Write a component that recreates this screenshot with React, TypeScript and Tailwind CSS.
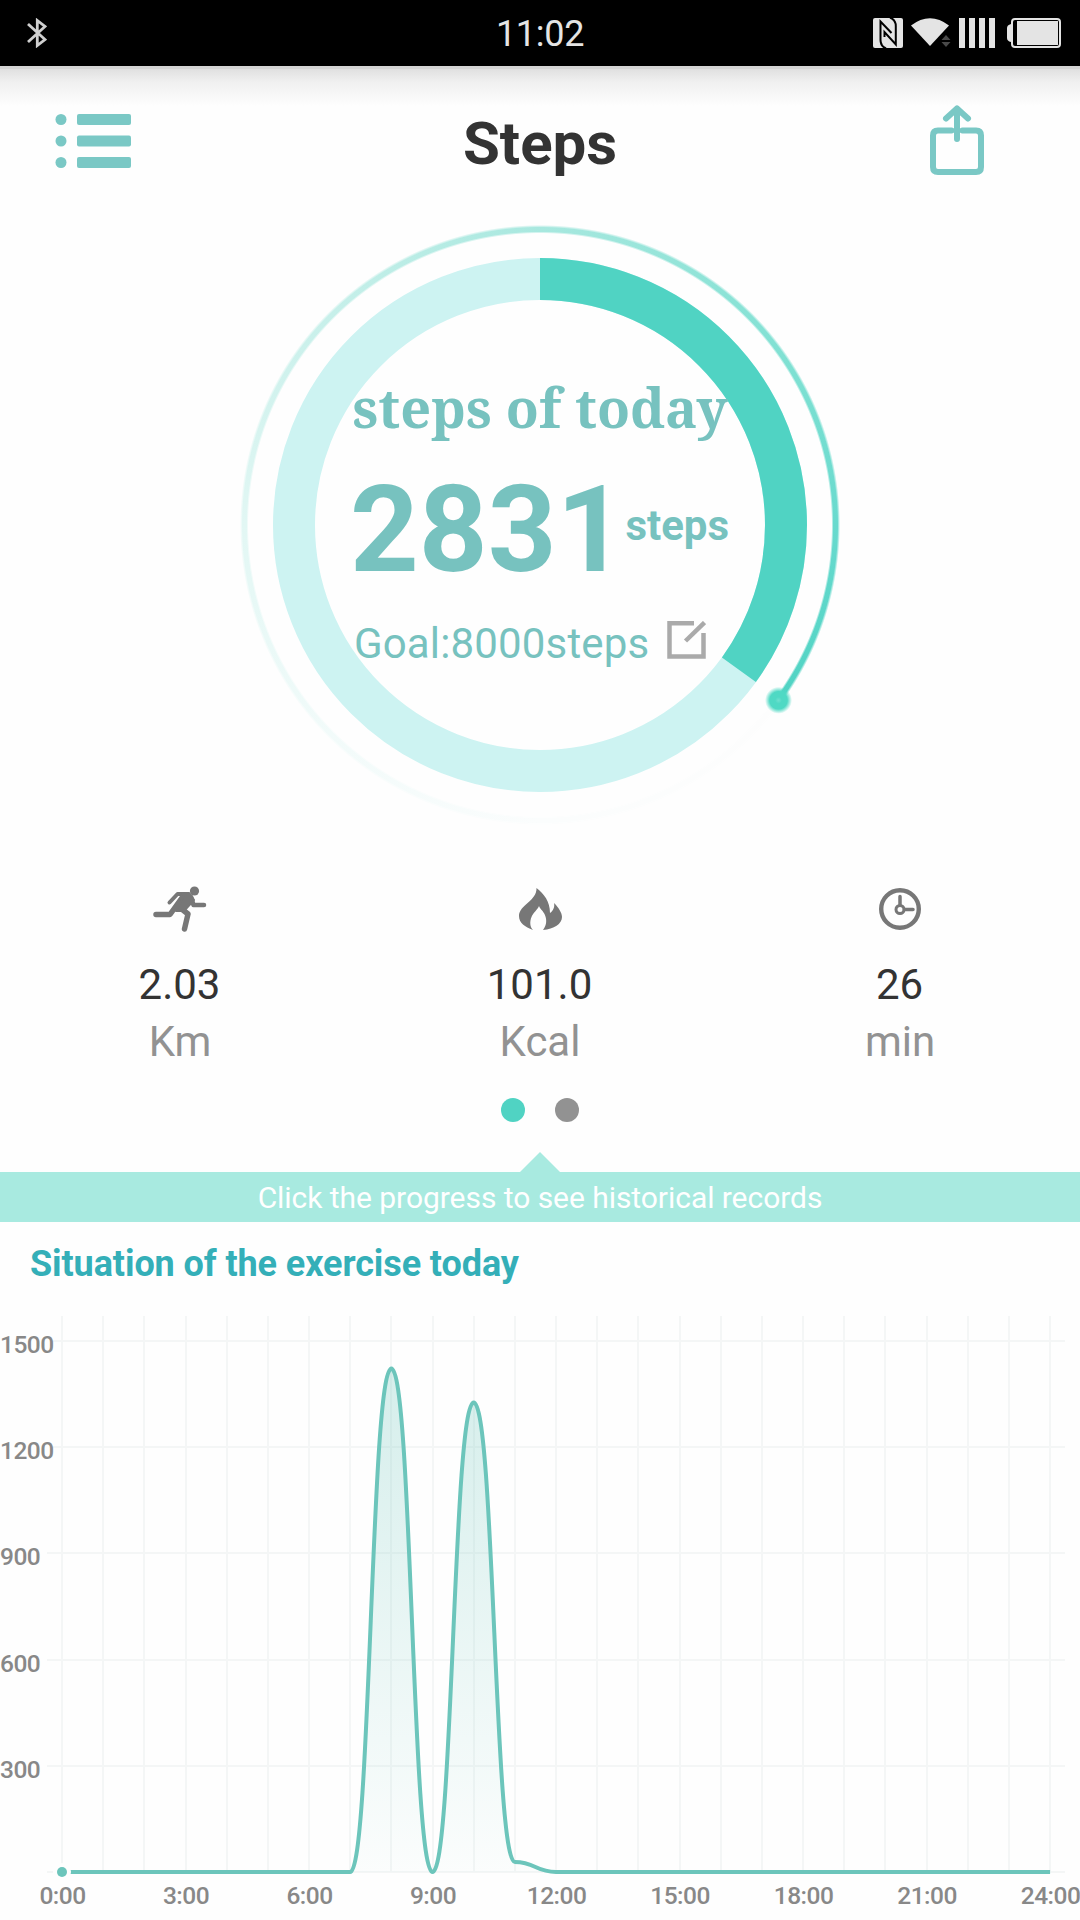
import type { ReactNode } from 'react';

const stepsToday = 2831;
const goal = 8000;
const percent = Math.floor((stepsToday / goal) * 100);

// steps per hour, 0:00 - 24:00
const hourly = [0, 0, 0, 0, 0, 0, 0, 0, 1422, 0, 1326, 28, 0, 0, 0, 0, 0, 0, 0, 0, 0, 0, 0, 0, 0];

function StatusBar() {
  return (
    <div className="relative flex h-[66px] items-center justify-between bg-black pl-[27px] pr-[19px]">
      <svg className="h-[30px] w-5" viewBox="0 0 20 30" fill="none" stroke="#cfcfcf" strokeWidth="2.8">
        <path d="M1 6l17 15.500L10.300 27.500V2.500L18 8.500 1 24" />
      </svg>
      <span className="absolute inset-x-0 mt-px text-center text-4xl tracking-[-0.3px] text-[#e4e4e4]">11:02</span>
      <svg className="h-[30px] w-[188px]" viewBox="873 18 188 30">
        <rect x="873" y="18" width="30" height="30" rx="2" fill="#e4e4e4" />
        <g fill="none" stroke="#000" strokeWidth="2">
          <path d="M886 48.500Q880.500 46 880.500 40V21.500L891.500 33" />
          <path d="M890 17.500Q895.800 20 895.800 26V44.500L884.500 32V37" />
        </g>
        <path d="M911 25.500Q930 11 949 25.500L930 46Z" fill="#e4e4e4" />
        <path d="M946 35l4.500 5h-9zM946 47l4.500-5h-9z" fill="#4a4a4a" />
        <path d="M959 18h6v30h-6zM969 18h6v30h-6zM979 18h6v30h-6zM989 18h6v30h-6z" fill="#e4e4e4" />
        <path d="M1011 24q-4 1-4 4v10q0 3 4 4z" fill="#e4e4e4" />
        <rect x="1012" y="19" width="48" height="28" rx="3" fill="#000" stroke="#e4e4e4" strokeWidth="2" />
        <rect x="1017" y="21" width="41" height="24" fill="#e4e4e4" />
      </svg>
    </div>
  );
}

function Header() {
  return (
    <header className="relative flex h-[154px] items-center justify-between bg-[linear-gradient(to_bottom,#d4d4d4_0,#d4d4d4_3px,#e0e0e0_3px,#f0f0f0_16px,#fefefe_40px)] pl-[55px] pr-24">
      <svg className="mb-1 h-[54px] w-[76px]" viewBox="0 0 76 54" fill="#7ac8c5">
        <circle cx="6" cy="5.500" r="5.500" />
        <circle cx="6" cy="27" r="5.500" />
        <circle cx="6" cy="48.500" r="5.500" />
        <rect x="22" y="0" width="54" height="11" rx="2" />
        <rect x="22" y="21.500" width="54" height="11" rx="2" />
        <rect x="22" y="43" width="54" height="11" rx="2" />
      </svg>
      <h1 className="absolute inset-x-0 pt-0.5 text-center text-6xl font-bold text-[#333]">Steps</h1>
      <svg
        className="mb-[6px] h-[70px] w-[54px]"
        viewBox="0 0 54 70"
        fill="none"
        stroke="#7ac8c5"
        strokeWidth="6"
        strokeLinecap="round"
        strokeLinejoin="round"
      >
        <path d="M21.500 25.500H8q-5 0-5 5v31.500q0 5 5 5h38q5 0 5-5V30.500q0-5-5-5H32.500" />
        <path d="M27 34V4M16 13.500L27 3.500 38 13.500" />
      </svg>
    </header>
  );
}

function ProgressRing() {
  const r = 246;
  const length = 2 * Math.PI * r;
  const filled = (length * percent) / 100;

  return (
    <section className="relative flex h-[610px] flex-col items-center">
      <div className="absolute left-1/2 top-0 size-[610px] -translate-x-1/2">
        <div className="size-full rounded-full bg-[conic-gradient(#a8e8df_0deg,#7de0d2_60deg,#68dace_90deg,#4fd3c3_126deg,#fdfdfd_127deg,#fbfdfd_180deg,#f2fbfa_225deg,#e2f7f4_270deg,#c4efe9_320deg,#a8e8df_360deg)] [mask-image:radial-gradient(circle,transparent_291.5px,black_293.5px,black_297.5px,transparent_300px)]" />
        <svg className="absolute inset-0" width="610" height="610" viewBox="0 0 610 610" fill="none">
          <defs>
            <radialGradient id="knob">
              <stop offset="0" stopColor="#6fdfcf" />
              <stop offset="0.25" stopColor="#4fd9c4" />
              <stop offset="0.65" stopColor="#4fd9c4" />
              <stop offset="1" stopColor="#4fd9c4" stopOpacity="0" />
            </radialGradient>
          </defs>
          <circle cx="305" cy="305" r={r} stroke="#cdf3f2" strokeWidth="42" />
          <circle
            cx="305"
            cy="305"
            r={r}
            stroke="#50d3c3"
            strokeWidth="42"
            strokeDasharray={`${filled} ${length}`}
            transform="rotate(-90 305 305)"
          />
          <circle cx="543.5" cy="480.300" r="13.500" fill="url(#knob)" />
        </svg>
      </div>
      <div className="relative flex w-[376px] flex-col pt-[152px] text-[#77c2bf]">
        <p className="whitespace-nowrap text-center font-['Noto_Serif','Droid_Serif','DejaVu_Serif_Condensed','DejaVu_Serif',serif] text-[54px] font-bold leading-[70px]">
          steps of today
        </p>
        <div className="-ml-0.5 mr-0.5 mt-[42px] flex h-[92px] items-center justify-between">
          <span className="text-[120px] font-bold leading-[92px]">{stepsToday}</span>
          <span className="pb-2 text-[42px] font-bold leading-[50px]">steps</span>
        </div>
        <div className="mt-[43px] flex h-[50px] items-center pl-0.5">
          <span className="text-[42px] leading-[50px] tracking-[0.15px]">Goal:{goal}steps</span>
          <svg className="ml-[18px] mb-2 h-[38px] w-[39px]" viewBox="0 0 39 38" fill="none" stroke="#aaa" strokeWidth="4.500">
            <path d="M27 2.300H2.500V35.500H36.500V12" />
            <path d="M18.500 20L37.500 1.500" strokeWidth="4.500" />
          </svg>
        </div>
      </div>
    </section>
  );
}

function Stat({ icon, value, unit }: { icon: ReactNode; value: string; unit: string }) {
  return (
    <div className="flex flex-1 flex-col items-center">
      <div className="flex h-[46px] items-center justify-center">{icon}</div>
      <span className="mt-[27px] pr-px text-[42px] leading-[52px] text-[#333]">{value}</span>
      <span className="mt-[5px] text-[42px] leading-[52px] text-[#929292]">{unit}</span>
    </div>
  );
}

function Stats() {
  return (
    <section className="flex pt-14">
      <Stat
        value="2.03"
        unit="Km"
        icon={
          <svg className="h-[46px] w-[54px]" viewBox="0 0 54 46" fill="none" stroke="#777" strokeLinecap="round" strokeLinejoin="round">
            <circle cx="41.500" cy="5" r="4.600" fill="#777" stroke="none" />
            <path d="M16.500 16.500L24.500 8H36" strokeWidth="4" />
            <path d="M38 11l2.500 8H51" strokeWidth="4.500" />
            <path d="M31 9L17 28.500H3" strokeWidth="5.500" />
            <path d="M30 24l5 4-3.500 15" strokeWidth="5.500" />
            <path d="M31 9h7l3 5-10 11h-8z" fill="#777" strokeWidth="2" />
          </svg>
        }
      />
      <Stat
        value="101.0"
        unit="Kcal"
        icon={
          <svg className="h-[42px] w-[43px]" viewBox="0 0 43 42" fill="#777">
            <path d="M17.500 0C25 6 31 13 31 25C34 23 36 19 35 15C40 20 43 25 43 29C43 36 35 41 24 42C28 37 28 31 25.500 26C23.500 22 21 21 20 18C19 21 14 25 12.500 29C10.500 34 11 39 14 42C6 39 0 35 0 28C0 17 18 13 17.500 0Z" />
          </svg>
        }
      />
      <Stat
        value="26"
        unit="min"
        icon={
          <svg className="size-[42px]" viewBox="0 0 42 42" fill="none" stroke="#777" strokeLinecap="round">
            <circle cx="21" cy="21" r="18.800" strokeWidth="4.400" />
            <circle cx="21" cy="21.500" r="4" strokeWidth="3" />
            <path d="M21 17V8.500M25.500 21.500H34" strokeWidth="3.500" />
          </svg>
        }
      />
    </section>
  );
}

function ExerciseChart() {
  const x = (hour: number) => 62 + hour * 41.17;
  const y = (steps: number) => 562 - steps * 0.354;

  let line = `M${x(0)} ${y(hourly[0])}`;
  for (let i = 1; i < hourly.length; i++) {
    const mid = (x(i - 1) + x(i)) / 2;
    line += `C${mid} ${y(hourly[i - 1])} ${mid} ${y(hourly[i])} ${x(i)} ${y(hourly[i])}`;
  }

  return (
    <svg className="block" width="1080" height="610" viewBox="0 0 1080 610">
      <defs>
        <linearGradient id="area" gradientUnits="userSpaceOnUse" x1="0" y1="59" x2="0" y2="562">
          <stop offset="0" stopColor="#6cc5bb" stopOpacity="0.28" />
          <stop offset="1" stopColor="#6cc5bb" stopOpacity="0.02" />
        </linearGradient>
      </defs>
      <g stroke="#f4f6f6" strokeWidth="2">
        {hourly.map((_, i) => (
          <line key={i} x1={Math.round(x(i))} x2={Math.round(x(i))} y1="6" y2="562" />
        ))}
        {[0, 300, 600, 900, 1200, 1500].map((v) => (
          <line key={v} x1={v > 900 ? 53 : 47} x2="1065" y1={Math.round(y(v))} y2={Math.round(y(v))} />
        ))}
      </g>
      <path d={`${line}V562H62Z`} fill="url(#area)" />
      <path d={line} fill="none" stroke="#6cc5bb" strokeWidth="4" />
      <circle cx="62" cy="562" r="9" fill="#fefefe" />
      <circle cx="62" cy="562" r="5" fill="#6cc5bb" />
      <g className="tracking-[-0.5px]" fill="#888" fontSize="24.500" fontWeight="500">
        {[300, 600, 900, 1200, 1500].map((v) => (
          <text key={v} x="0" y={y(v) + 12}>
            {v}
          </text>
        ))}
        {[0, 3, 6, 9, 12, 15, 18, 21, 24].map((h) => (
          <text key={h} x={x(h) + 0.5} y="593.500" textAnchor="middle">
            {h}:00
          </text>
        ))}
      </g>
    </svg>
  );
}

export default function App() {
  return (
    <div className="flex h-[1920px] w-[1080px] flex-col overflow-hidden bg-[#fefefe] font-[Roboto,sans-serif]">
      <StatusBar />
      <Header />
      <ProgressRing />
      <Stats />
      <div className="mt-[30px] flex h-6 justify-center gap-[30px]">
        <span className="size-6 rounded-full bg-[#50d3c3]" />
        <span className="size-6 rounded-full bg-[#929292]" />
      </div>
      <div className="mt-[30px] flex flex-col items-center">
        <svg className="h-5 w-10" viewBox="0 0 40 20" fill="#a8eae0">
          <path d="M20 0L40 20H0Z" />
        </svg>
        <div className="flex h-[50px] w-full items-center justify-center bg-[#a8eae0] pt-0.5 text-3xl tracking-[-0.05px] text-white">
          Click the progress to see historical records
        </div>
      </div>
      <h2 className="h-[88px] pl-[30px] pt-[22px] text-4xl font-bold tracking-[-0.09px] text-[#34afb8]">
        Situation of the exercise today
      </h2>
      <ExerciseChart />
    </div>
  );
}
